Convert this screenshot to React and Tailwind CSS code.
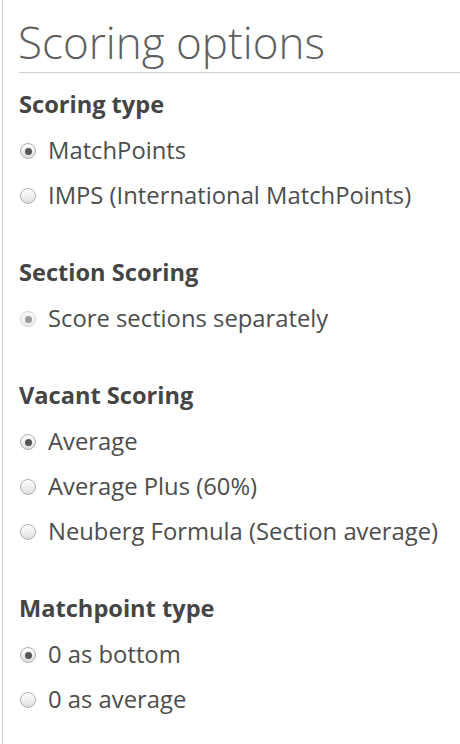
import React from "react";

function Radio({ checked, disabled }) {
  return (
    <span
      className={
        "relative inline-flex items-center justify-center w-[16px] h-[16px] rounded-full border shrink-0 " +
        (disabled
          ? "border-[#d4d4d4] bg-[linear-gradient(#fafafa,#ececec)]"
          : "border-[#b0b0b0] bg-[linear-gradient(#ffffff,#dedede)]")
      }
    >
      {checked && (
        <span
          className={
            "w-[7px] h-[7px] rounded-full " +
            (disabled ? "bg-[#9a9a9a]" : "bg-[#555555]")
          }
        />
      )}
    </span>
  );
}

function Row({ label, checked, disabled }) {
  return (
    <div className="h-[45px] flex items-center pl-[19px]">
      <Radio checked={checked} disabled={disabled} />
      <span className="ml-[12px] text-[23.8px] text-[#4d4d4d] leading-none">{label}</span>
    </div>
  );
}

function Section({ title, items, first }) {
  return (
    <div className={first ? "" : "mt-[39.5px]"}>
      <div className="h-[30px] flex items-center text-[23.6px] font-bold text-[#454545] pl-[18px]">
        {title}
      </div>
      <div className="mt-[8.5px]">
        {items.map((it) => (
          <Row key={it.label} {...it} />
        ))}
      </div>
    </div>
  );
}

export default function App() {
  return (
    <div
      className="w-[460px] h-[744px] bg-white border-l-[1px] border-[#cfcfcf] ml-[2px] overflow-hidden"
      style={{ fontFamily: '"Open Sans", sans-serif' }}
    >
      <div className="ml-[16px]">
        <div className="pt-[16px] pb-[4px] border-b border-[#d0d0d0]">
          <h1 className="text-[44px] font-light text-[#5f5f5f] leading-[52px] -ml-[1px]">
            Scoring options
          </h1>
        </div>
      </div>
      <div className="-ml-[2px] mt-[17px]">
        <Section
          first
          title="Scoring type"
          items={[
            { label: "MatchPoints", checked: true },
            { label: "IMPS (International MatchPoints)" },
          ]}
        />
        <Section
          title="Section Scoring"
          items={[{ label: "Score sections separately", checked: true, disabled: true }]}
        />
        <Section
          title="Vacant Scoring"
          items={[
            { label: "Average", checked: true },
            { label: "Average Plus (60%)" },
            { label: "Neuberg Formula (Section average)" },
          ]}
        />
        <Section
          title="Matchpoint type"
          items={[
            { label: "0 as bottom", checked: true },
            { label: "0 as average" },
          ]}
        />
      </div>
    </div>
  );
}
